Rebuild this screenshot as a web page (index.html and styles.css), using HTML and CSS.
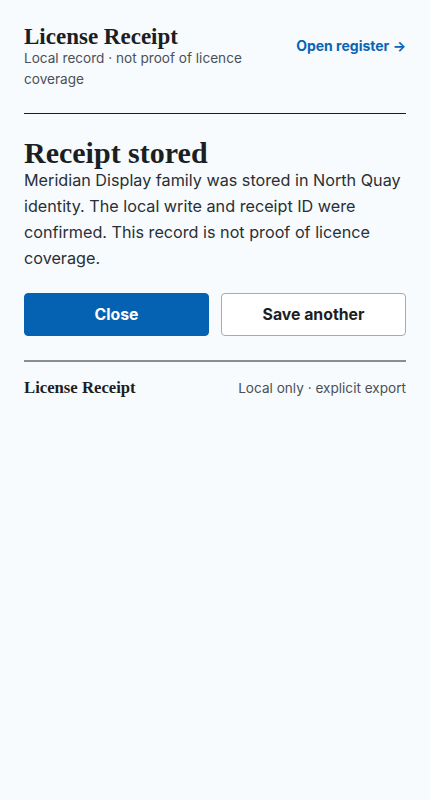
FILE: index.html
```html
<!DOCTYPE html>
<html lang="en">
<head>
<meta charset="utf-8">
<title>License Receipt</title>
<link rel="stylesheet" href="styles.css">
</head>
<body>
<div class="page">
  <header class="top">
    <div class="brand">
      <h1 class="brand-title">License Receipt</h1>
      <p class="brand-sub">Local record · not proof of licence coverage</p>
    </div>
    <a class="reg-link" href="#">Open register →</a>
  </header>
  <main class="main">
    <h2 class="heading">Receipt stored</h2>
    <p class="body-text">Meridian Display family was stored in North Quay identity. The local write and receipt ID were confirmed. This record is not proof of licence coverage.</p>
    <div class="actions">
      <button class="btn btn-primary" type="button">Close</button>
      <button class="btn btn-secondary" type="button">Save another</button>
    </div>
  </main>
  <footer class="foot">
    <span class="foot-title">License Receipt</span>
    <span class="foot-note">Local only · explicit export</span>
  </footer>
</div>
</body>
</html>
```
FILE: styles.css
```css
html, body {
  margin: 0;
  padding: 0;
  background: #f7fbfd;
}
body {
  font-family: Inter, "Liberation Sans", sans-serif;
  color: #1b1f24;
}
.page {
  padding: 24px 24px 0;
}
.top {
  display: flex;
  justify-content: space-between;
  align-items: flex-start;
  padding-bottom: 23px;
  border-bottom: 1px solid #1b1f24;
}
.brand-title {
  margin: 0;
  font-family: "Liberation Serif", serif;
  font-weight: 700;
  font-size: 23px;
  line-height: 26px;
  color: #1b1f24;
}
.brand-sub {
  margin: -2px 0 0;
  width: 236px;
  font-size: 13.6px;
  line-height: 21px;
  color: #4a5058;
}
.reg-link {
  margin-top: 13px;
  font-size: 14px;
  font-weight: 700;
  color: #0a64b4;
  text-decoration: none;
}
.main {
  padding: 25px 0 24px;
  border-bottom: 2px solid #8a8d92;
}
.heading {
  margin: 0;
  font-family: "Liberation Serif", serif;
  font-weight: 700;
  font-size: 30px;
  line-height: 28px;
  color: #1b1f24;
}
.body-text {
  margin: 0;
  font-size: 16.2px;
  line-height: 26px;
  color: #2a2f35;
}
.actions {
  display: grid;
  grid-template-columns: 1fr 1fr;
  gap: 12px;
  margin-top: 22px;
}
.btn {
  height: 43px;
  border-radius: 4px;
  font-family: Inter, "Liberation Sans", sans-serif;
  font-size: 15.8px;
  font-weight: 700;
  cursor: pointer;
}
.btn-primary {
  background: #0562b3;
  border: 1px solid #0562b3;
  color: #ffffff;
}
.btn-secondary {
  background: #ffffff;
  border: 1px solid #a7abb1;
  color: #1b1f24;
}
.foot {
  display: flex;
  justify-content: space-between;
  align-items: center;
  padding: 15px 0;
}
.foot-title {
  font-family: "Liberation Serif", serif;
  font-weight: 700;
  font-size: 16.7px;
  line-height: 22px;
  color: #1b1f24;
}
.foot-note {
  font-size: 13.6px;
  line-height: 22px;
  color: #4a5058;
}
```
